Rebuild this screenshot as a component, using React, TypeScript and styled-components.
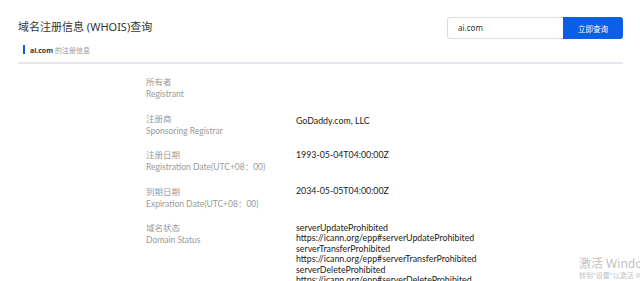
import React from "react";
import styled, { createGlobalStyle } from "styled-components";

const GlobalStyle = createGlobalStyle`
  html, body {
    margin: 0;
    padding: 0;
    background: #fff;
    overflow: hidden;
  }
  body {
    font-family: "Noto Sans", "Noto Sans CJK SC", sans-serif;
  }
`;

const Page = styled.div`
  width: 640px;
  height: 281px;
  overflow: hidden;
  position: relative;
  padding: 0 17px 0 18px;
  box-sizing: border-box;
`;

const Header = styled.div`
  display: flex;
  align-items: center;
  justify-content: space-between;
  padding-top: 17px;
  height: 39px;
  box-sizing: border-box;
`;

const Title = styled.h1`
  margin: 0;
  font-size: 11px;
  font-weight: 400;
  color: #333;
  line-height: 22px;
  transform: translateY(-1px);
`;

const SearchForm = styled.div`
  display: flex;
  height: 22px;
`;

const SearchInput = styled.div`
  width: 116px;
  height: 22px;
  box-sizing: border-box;
  border: 1px solid #d6dbe3;
  border-right: none;
  border-radius: 3px 0 0 3px;
  padding-left: 10px;
  font-size: 8px;
  line-height: 20px;
  color: #333;
`;

const SearchButton = styled.button`
  width: 60px;
  height: 22px;
  border: none;
  border-radius: 0 3px 3px 0;
  background: #0c5ee6;
  color: #fff;
  font-family: "Noto Sans CJK SC", sans-serif;
  font-size: 7.5px;
  padding: 0;
`;

const SubHead = styled.div`
  display: flex;
  align-items: center;
  gap: 5px;
  margin: 6px 0 0 5px;
  height: 9px;
  font-size: 7px;
  color: #999;
`;

const Marker = styled.span`
  width: 2px;
  height: 9px;
  background: #0c5ee6;
`;

const Domain = styled.b`
  color: #333;
  font-weight: 700;
`;

const Divider = styled.div`
  height: 2px;
  background: #e6e8ee;
  margin-top: 8px;
`;

const List = styled.div`
  display: flex;
  flex-direction: column;
  gap: 12.5px;
  padding: 12px 0 0 128px;
  font-family: Lato, "Noto Sans CJK SC", sans-serif;
`;

const Row = styled.div`
  display: grid;
  grid-template-columns: 150px 1fr;
`;

const Label = styled.div`
  font-size: 8.5px;
  line-height: 12px;
  color: #9a9a9a;
`;

const Value = styled.div<{ $top?: number }>`
  font-size: 8.8px;
  line-height: 10.4px;
  color: #222;
  padding-top: ${(p) => p.$top ?? 0}px;
`;

const Watermark = styled.div`
  position: absolute;
  left: 579px;
  top: 257px;
  white-space: nowrap;
  color: #c2c2c2;
  pointer-events: none;
`;

const WmMain = styled.div`
  font-size: 12px;
  line-height: 14px;
`;

const WmSub = styled.div`
  font-size: 7px;
  line-height: 9px;
`;

const rows = [
  { cn: "所有者", en: "Registrant", values: [] as string[], top: 0 },
  { cn: "注册商", en: "Sponsoring Registrar", values: ["GoDaddy.com, LLC"], top: 3 },
  { cn: "注册日期", en: "Registration Date(UTC+08：00)", values: ["1993-05-04T04:00:00Z"], top: 1 },
  { cn: "到期日期", en: "Expiration Date(UTC+08：00)", values: ["2034-05-05T04:00:00Z"], top: 0 },
  {
    cn: "域名状态",
    en: "Domain Status",
    values: [
      "serverUpdateProhibited",
      "https://icann.org/epp#serverUpdateProhibited",
      "serverTransferProhibited",
      "https://icann.org/epp#serverTransferProhibited",
      "serverDeleteProhibited",
      "https://icann.org/epp#serverDeleteProhibited",
    ],
    top: 1,
  },
];

export default function App() {
  return (
    <>
      <GlobalStyle />
      <Page>
        <Header>
          <Title>域名注册信息 (WHOIS)查询</Title>
          <SearchForm>
            <SearchInput>ai.com</SearchInput>
            <SearchButton>立即查询</SearchButton>
          </SearchForm>
        </Header>
        <SubHead>
          <Marker />
          <span>
            <Domain>ai.com</Domain> 的注册信息
          </span>
        </SubHead>
        <Divider />
        <List>
          {rows.map((r) => (
            <Row key={r.en}>
              <div>
                <Label>{r.cn}</Label>
                <Label>{r.en}</Label>
              </div>
              <Value $top={r.top}>
                {r.values.map((v) => (
                  <div key={v}>{v}</div>
                ))}
              </Value>
            </Row>
          ))}
        </List>
        <Watermark>
          <WmMain>激活 Windows</WmMain>
          <WmSub>转到"设置"以激活 Windows。</WmSub>
        </Watermark>
      </Page>
    </>
  );
}
